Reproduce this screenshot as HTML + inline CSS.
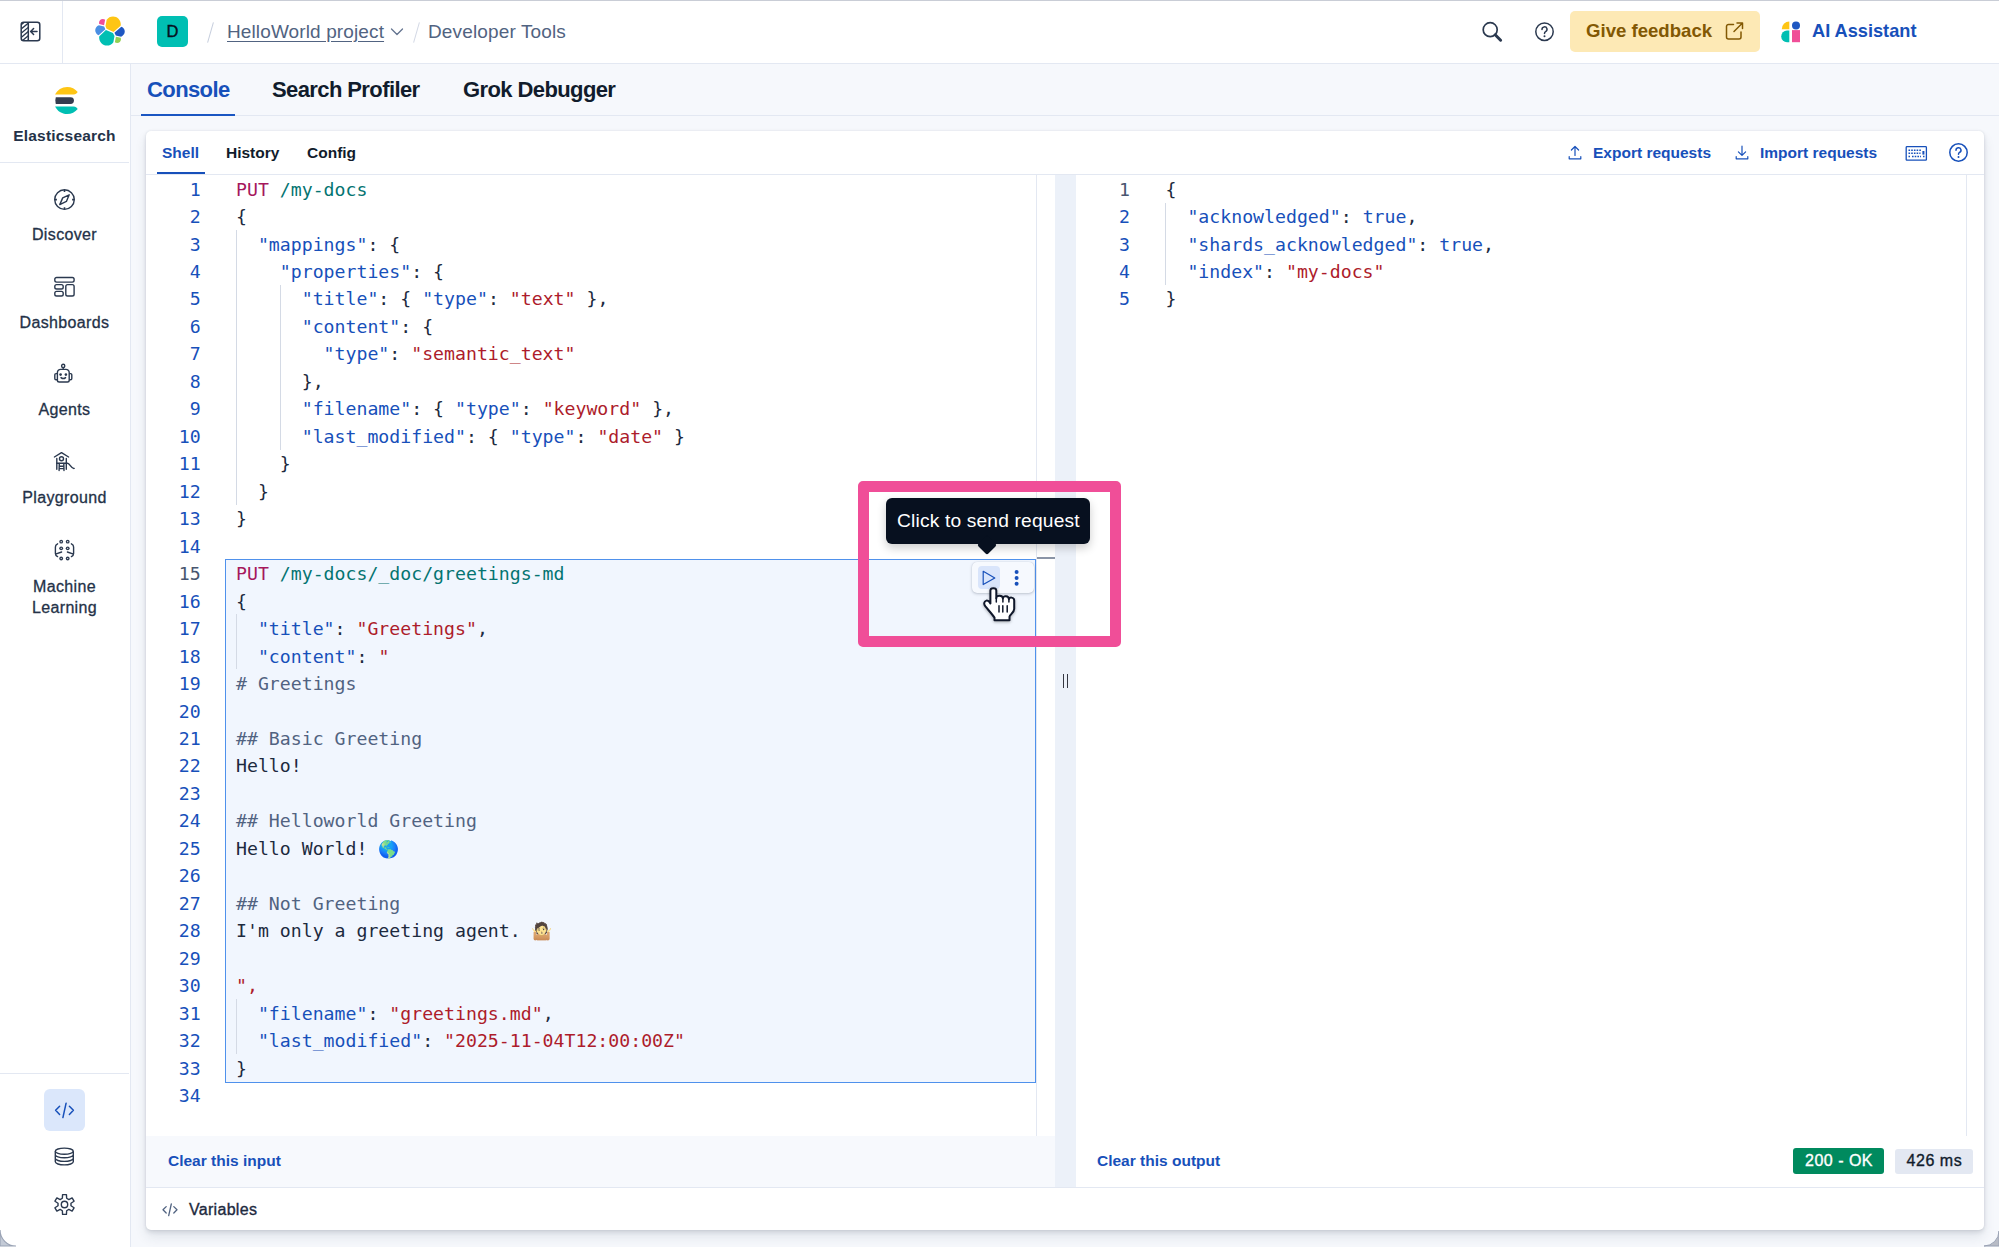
<!DOCTYPE html>
<html lang="en">
<head>
<meta charset="utf-8">
<title>Developer Tools - Console</title>
<style>
*{box-sizing:border-box;margin:0;padding:0}
html,body{width:1999px;height:1247px;overflow:hidden;background:#f6f8fc}
body{position:relative;font-family:"Liberation Sans",sans-serif;color:#1a1f2c}
.abs{position:absolute}
.med{font-weight:normal!important;-webkit-text-stroke:.35px currentColor}
.t{position:absolute;white-space:nowrap;line-height:1}
/* header */
#hdr{left:0;top:0;width:1999px;height:64px;background:#fff;border-bottom:1px solid #e3e8f2;border-top:1px solid #c9cdd6}
#hsep{left:62px;top:1px;width:1px;height:62px;background:#e3e8f2}
#avatar{left:157px;top:16px;width:31px;height:31px;border-radius:5px;background:#00bfb3;color:#07101f;font-size:16.500px;-webkit-text-stroke:.4px #07101f;text-align:center;line-height:31.500px}
.bc{font-size:19px;color:#516381;top:22px}
#fb{left:1570px;top:11px;width:190px;height:41px;border-radius:5px;background:#fde9b5}
/* side nav */
#nav{left:0;top:64px;width:131px;height:1183px;background:#fff;border-right:1px solid #e3e8f2}
.nl{position:absolute;left:0;width:129px;text-align:center;font-size:16px;color:#243248;line-height:1;white-space:nowrap;letter-spacing:.35px;-webkit-text-stroke:.3px currentColor}
.nsep{position:absolute;left:0;width:129px;height:1px;background:#e3e8f2}
/* tabs */
.tab{font-size:22px;letter-spacing:-.6px;font-weight:bold;color:#111c2c;top:78.500px}
#tabline{left:131px;top:115px;width:1868px;height:1px;background:#e3e8f2}
/* panel */
#panel{left:146px;top:131px;width:1838px;height:1099px;background:#fff;border-radius:5px;box-shadow:0 0 2px rgba(43,57,79,.10),0 2px 4px rgba(43,57,79,.13),0 7px 12px rgba(43,57,79,.10)}
.stab{font-size:15.5px;font-weight:bold;color:#111c2c;top:145px}
.lnk{font-size:15.5px;font-weight:bold;color:#1750ba}
/* code */
.code{position:absolute;font-family:"DejaVu Sans Mono","Liberation Mono",monospace;font-size:18.19px;line-height:27.48px;color:#1d2a3e}
.ln{position:absolute;font-family:"DejaVu Sans Mono","Liberation Mono",monospace;font-size:18.19px;line-height:27.48px;color:#1750ba;text-align:right}
.m{color:#a6185c}.u{color:#047471}.k{color:#1750ba}.s{color:#ad1c2b}.p{color:#1d2a3e}.g{color:#516381}
.cl{height:27.48px;white-space:pre}.dk{color:#48566f}.emo{font-family:"Noto Color Emoji",sans-serif;font-size:17px}
.guide{position:absolute;width:1px;background:#d4dae5}
</style>
</head>
<body>
<!-- HEADER -->
<div id="hdr" class="abs"></div>
<div id="hsep" class="abs"></div>
<div id="avatar" class="abs">D</div>
<div class="abs" style="left:209.500px;top:22px;width:1.300px;height:21px;background:#c6cedd;transform:rotate(16deg)"></div>
<div class="t bc" style="left:227px;letter-spacing:.12px;text-decoration:underline;text-underline-offset:3px">HelloWorld project</div>
<div class="abs" style="left:415.500px;top:22px;width:1.300px;height:21px;background:#d3d9e5;transform:rotate(16deg)"></div>
<div class="t bc" style="left:428px;letter-spacing:.14px">Developer Tools</div>
<div id="fb" class="abs"></div>
<div class="t" style="left:1586px;top:22px;font-size:18.600px;font-weight:bold;color:#825803">Give feedback</div>
<div class="t" style="left:1812px;top:22px;font-size:18.200px;font-weight:bold;color:#1750ba">AI Assistant</div>

<!-- NAV -->
<div id="nav" class="abs">
  <div class="nl" style="top:64px;font-weight:bold;font-size:15.5px;letter-spacing:.2px;-webkit-text-stroke:0">Elasticsearch</div>
  <div class="nsep" style="top:98px"></div>
  <div class="nl" style="top:163px">Discover</div>
  <div class="nl" style="top:251px">Dashboards</div>
  <div class="nl" style="top:338px">Agents</div>
  <div class="nl" style="top:426px">Playground</div>
  <div class="nl" style="top:515px">Machine</div>
  <div class="nl" style="top:536px">Learning</div>
  <div class="nsep" style="top:1009px"></div>
</div>


<!-- TABS -->
<div class="t tab" style="left:147px;color:#1750ba">Console</div>
<div class="t tab" style="left:272px">Search Profiler</div>
<div class="t tab" style="left:463px">Grok Debugger</div>
<div id="tabline" class="abs"></div>
<div class="abs" style="left:141px;top:113.500px;width:93.500px;height:2px;background:#1a56c2"></div>

<!-- PANEL -->
<div id="panel" class="abs"></div>
<div class="t stab" style="left:162px;color:#1750ba">Shell</div>
<div class="t stab" style="left:226px">History</div>
<div class="t stab" style="left:307px">Config</div>
<div class="abs" style="left:157px;top:172px;width:48px;height:2px;background:#1750ba"></div>
<div class="abs" style="left:146px;top:174px;width:1838px;height:1px;background:#e3e8f2"></div>
<div class="t lnk" style="left:1593px;top:145px">Export requests</div>
<div class="t lnk" style="left:1760px;top:145px">Import requests</div>


<!-- EDITOR LEFT -->
<div class="abs" style="left:225px;top:559px;width:811px;height:524px;background:#f1f6fe;border:1px solid #4f91ec"></div>
<div class="ln" style="left:150.700px;top:175.6px;width:50px">
<div class="cl">1</div>
<div class="cl">2</div>
<div class="cl">3</div>
<div class="cl">4</div>
<div class="cl">5</div>
<div class="cl">6</div>
<div class="cl">7</div>
<div class="cl">8</div>
<div class="cl">9</div>
<div class="cl">10</div>
<div class="cl">11</div>
<div class="cl">12</div>
<div class="cl">13</div>
<div class="cl">14</div>
<div class="cl dk">15</div>
<div class="cl">16</div>
<div class="cl">17</div>
<div class="cl">18</div>
<div class="cl">19</div>
<div class="cl">20</div>
<div class="cl">21</div>
<div class="cl">22</div>
<div class="cl">23</div>
<div class="cl">24</div>
<div class="cl">25</div>
<div class="cl">26</div>
<div class="cl">27</div>
<div class="cl">28</div>
<div class="cl">29</div>
<div class="cl">30</div>
<div class="cl">31</div>
<div class="cl">32</div>
<div class="cl">33</div>
<div class="cl">34</div>
</div>
<div class="guide" style="left:236px;top:230px;height:275px"></div>
<div class="guide" style="left:280px;top:285px;height:165px"></div>
<div class="guide" style="left:236px;top:614px;height:55px"></div>
<div class="guide" style="left:236px;top:999px;height:55px"></div>
<div class="code" style="left:236px;top:175.6px">
<div class="cl"><span class="m">PUT</span> <span class="u">/my-docs</span></div>
<div class="cl">{</div>
<div class="cl">  <span class="k">"mappings"</span>: {</div>
<div class="cl">    <span class="k">"properties"</span>: {</div>
<div class="cl">      <span class="k">"title"</span>: { <span class="k">"type"</span>: <span class="s">"text"</span> },</div>
<div class="cl">      <span class="k">"content"</span>: {</div>
<div class="cl">        <span class="k">"type"</span>: <span class="s">"semantic_text"</span></div>
<div class="cl">      },</div>
<div class="cl">      <span class="k">"filename"</span>: { <span class="k">"type"</span>: <span class="s">"keyword"</span> },</div>
<div class="cl">      <span class="k">"last_modified"</span>: { <span class="k">"type"</span>: <span class="s">"date"</span> }</div>
<div class="cl">    }</div>
<div class="cl">  }</div>
<div class="cl">}</div>
<div class="cl">&nbsp;</div>
<div class="cl"><span class="m">PUT</span> <span class="u">/my-docs/_doc/greetings-md</span></div>
<div class="cl">{</div>
<div class="cl">  <span class="k">"title"</span>: <span class="s">"Greetings"</span>,</div>
<div class="cl">  <span class="k">"content"</span>: <span class="s">"</span></div>
<div class="cl"><span class="g"># Greetings</span></div>
<div class="cl">&nbsp;</div>
<div class="cl"><span class="g">## Basic Greeting</span></div>
<div class="cl">Hello!</div>
<div class="cl">&nbsp;</div>
<div class="cl"><span class="g">## Helloworld Greeting</span></div>
<div class="cl">Hello World! <span class="emo">🌎</span></div>
<div class="cl">&nbsp;</div>
<div class="cl"><span class="g">## Not Greeting</span></div>
<div class="cl">I'm only a greeting agent. <span class="emo" style="filter:grayscale(.55) brightness(1.12)">🤷</span></div>
<div class="cl">&nbsp;</div>
<div class="cl"><span class="s">",</span></div>
<div class="cl">  <span class="k">"filename"</span>: <span class="s">"greetings.md"</span>,</div>
<div class="cl">  <span class="k">"last_modified"</span>: <span class="s">"2025-11-04T12:00:00Z"</span></div>
<div class="cl">}</div>
<div class="cl">&nbsp;</div>
</div>
<!-- EDITOR RIGHT -->
<div class="ln" style="left:1080px;top:175.6px;width:50px">
<div class="cl dk">1</div>
<div class="cl">2</div>
<div class="cl">3</div>
<div class="cl">4</div>
<div class="cl">5</div>
</div>
<div class="guide" style="left:1165px;top:203px;height:82px"></div>
<div class="code" style="left:1165.5px;top:175.6px">
<div class="cl">{</div>
<div class="cl">  <span class="k">"acknowledged"</span>: <span class="k">true</span>,</div>
<div class="cl">  <span class="k">"shards_acknowledged"</span>: <span class="k">true</span>,</div>
<div class="cl">  <span class="k">"index"</span>: <span class="s">"my-docs"</span></div>
<div class="cl">}</div>
</div>

<!-- editor chrome -->
<div class="abs" style="left:1036px;top:175px;width:1px;height:961px;background:#e3e8f2"></div>
<div class="abs" style="left:1037px;top:557px;width:18px;height:2px;background:#8a94a6"></div>
<div class="abs" style="left:1055px;top:175px;width:20.700px;height:1012px;background:#ecf1f9"></div>
<div class="abs" style="left:1063px;top:674px;width:1px;height:14px;background:#343741"></div>
<div class="abs" style="left:1067px;top:674px;width:1px;height:14px;background:#343741"></div>
<div class="abs" style="left:1966px;top:175px;width:1px;height:961px;background:#e3e8f2"></div>
<div class="abs" style="left:146px;top:1135.500px;width:909px;height:51.500px;background:#f7f9fd"></div>
<div class="abs" style="left:146px;top:1187px;width:1838px;height:1px;background:#e3e8f2"></div>
<div class="t lnk" style="left:168px;top:1153px">Clear this input</div>
<div class="t lnk" style="left:1097px;top:1153px">Clear this output</div>
<div class="abs" style="left:1793px;top:1148px;width:91px;height:26px;background:#008a5e;border-radius:3px"></div>
<div class="t med" style="left:1805px;top:1153px;font-size:16px;letter-spacing:.5px;color:#fff">200 - OK</div>
<div class="abs" style="left:1895px;top:1149px;width:78px;height:25px;background:#e3e8f2;border-radius:3px"></div>
<div class="t med" style="left:1906.5px;top:1153px;font-size:16px;letter-spacing:.55px;color:#111c2c">426 ms</div>
<div class="t med" style="left:189px;top:1202px;font-size:16px;letter-spacing:.3px;color:#1d2a3e">Variables</div>

<!-- ICONS -->
<!-- collapse menu -->
<svg class="abs" style="left:20px;top:21px" width="21" height="21" viewBox="0 0 21 21" fill="none" stroke="#2b394f" stroke-width="1.5">
  <defs><clipPath id="cpL"><rect x="1.5" y="1.5" width="7" height="18"/></clipPath></defs>
  <rect x="1.2" y="1.2" width="18.6" height="18.6" rx="2.5"/>
  <line x1="8.3" y1="1.2" x2="8.3" y2="19.8"/>
  <g clip-path="url(#cpL)" stroke-width="1.300"><path d="M-2 6.500 L10 -3.500 M-2 10.700 L10 .700 M-2 14.900 L10 4.900 M-2 19.100 L10 9.100 M-2 23.300 L10 13.300 M-2 27.500 L10 17.500"/></g>
  <path d="M17 10.5 H10.8 M13.6 7.5 L10.6 10.5 L13.6 13.5" stroke-linecap="round" stroke-linejoin="round"/>
</svg>
<!-- elastic logo -->
<svg class="abs" style="left:94px;top:15px" width="32" height="32" viewBox="0 0 32 32">
  <path fill="#FEC514" d="M12.58 13.787l7.002 3.211 7.066-6.213a7.849 7.849 0 0 0 .152-1.557c0-4.287-3.472-7.775-7.74-7.775a7.723 7.723 0 0 0-6.388 3.382l-1.176 6.122 1.084 2.83z"/>
  <path fill="#00BFB3" d="M5.32 21.215a7.93 7.93 0 0 0-.148 1.58c0 4.303 3.485 7.803 7.77 7.803a7.75 7.75 0 0 0 6.415-3.408l1.167-6.104-1.557-2.99-7.03-3.217-6.617 6.336z"/>
  <path fill="#F04E98" d="M5.278 9.112l4.799 1.138 1.051-5.482a3.791 3.791 0 0 0-2.313-.789c-2.086 0-3.783 1.706-3.783 3.803 0 .463.083.908.246 1.33"/>
  <path fill="#4A8FE3" d="M4.861 10.262c-2.143.712-3.64 2.778-3.64 5.05 0 2.212 1.362 4.187 3.406 4.966l6.733-6.112-1.237-2.654-5.262-1.25z"/>
  <path fill="#93D052" d="M20.862 27.189a3.775 3.775 0 0 0 2.306.79c2.086 0 3.783-1.705 3.783-3.802 0-.463-.083-.907-.246-1.33l-4.795-1.126-1.048 5.468z"/>
  <path fill="#1E57C2" d="M21.837 20.435l5.279 1.24c2.145-.712 3.642-2.78 3.642-5.052a5.32 5.32 0 0 0-3.417-4.955l-6.904 6.078 1.4 2.689z"/>
</svg>
<!-- breadcrumb chevron -->
<svg class="abs" style="left:390px;top:25px" width="14" height="14" viewBox="0 0 14 14" fill="none" stroke="#64748f" stroke-width="1.300" stroke-linecap="round" stroke-linejoin="round"><path d="M1.500 4 L7 9.500 L12.500 4"/></svg>
<!-- search -->
<svg class="abs" style="left:1481px;top:20px" width="23" height="23" viewBox="0 0 23 23" fill="none" stroke="#2b394f" stroke-width="1.7"><circle cx="9.2" cy="9.7" r="7"/><path d="M14.2 14.8 L19.6 20.2" stroke-width="3" stroke-linecap="round"/></svg>
<!-- help (header) -->
<svg class="abs" style="left:1534px;top:21px" width="21" height="21" viewBox="0 0 21 21" fill="none" stroke="#2b394f" stroke-width="1.5"><circle cx="10.5" cy="10.7" r="8.7"/><path d="M8 8.4 a2.5 2.5 0 1 1 3.6 2.2 c-.8.4-1.1.9-1.1 1.8" stroke-linecap="round"/><circle cx="10.5" cy="15.2" r="1" fill="#2b394f" stroke="none"/></svg>
<!-- popout -->
<svg class="abs" style="left:1725px;top:21px" width="20" height="20" viewBox="0 0 20 20" fill="none" stroke="#825803" stroke-width="1.5" stroke-linecap="round" stroke-linejoin="round"><path d="M8.5 3.5 H3.5 a2 2 0 0 0 -2 2 V16 a2 2 0 0 0 2 2 H14 a2 2 0 0 0 2 -2 V11"/><path d="M12 2 H17.5 V7.5 M17.5 2 L9 10.5"/></svg>
<!-- AI assistant -->
<svg class="abs" style="left:1780px;top:20px" width="22" height="24" viewBox="0 0 22 24">
  <path d="M9.3 1.5 V9.3 H1.8 A7.6 7.6 0 0 1 9.3 1.5 Z" fill="#fec514"/>
  <path d="M9.3 10.6 V22.2 H7 A5.8 5.8 0 0 1 7 10.6 Z" fill="#00bfb3"/>
  <circle cx="16" cy="5.4" r="4" fill="#1e57c2"/>
  <rect x="12" y="10.1" width="8" height="12.1" fill="#f04e98"/>
</svg>
<!-- export / import -->
<svg class="abs" style="left:1568px;top:145px" width="14" height="15" viewBox="0 0 14 15" fill="none" stroke="#1750ba" stroke-width="1.2" stroke-linecap="round" stroke-linejoin="round"><path d="M7 10.5 V1.6 M3.4 5 L7 1.5 L10.6 5 M1.2 11.5 V13.8 H12.8 V11.5"/></svg>
<svg class="abs" style="left:1735px;top:145px" width="14" height="15" viewBox="0 0 14 15" fill="none" stroke="#1750ba" stroke-width="1.2" stroke-linecap="round" stroke-linejoin="round"><path d="M7 1.2 V10.2 M3.4 6.8 L7 10.4 L10.6 6.8 M1.2 11.5 V13.8 H12.8 V11.5"/></svg>
<!-- keyboard -->
<svg class="abs" style="left:1905px;top:145px" width="23" height="17" viewBox="0 0 23 17" fill="none" stroke="#1750ba" stroke-width="1.3"><rect x="1.2" y="1.6" width="20.2" height="13.6" rx="0.8"/><path d="M3.5 5.2 H17 M3.5 8.2 H15.5 M3.5 11.6 H5 M7 11.6 H16 M18 11.6 H19.5" stroke-dasharray="1.6 1.1" stroke-width="1.5"/><path d="M18.4 6 V9.6" stroke-width="2"/></svg>
<!-- help (panel) -->
<svg class="abs" style="left:1948px;top:142px" width="21" height="21" viewBox="0 0 21 21" fill="none" stroke="#1750ba" stroke-width="1.5"><circle cx="10.5" cy="10.5" r="8.7"/><path d="M8 8.2 a2.5 2.5 0 1 1 3.6 2.2 c-.8.4-1.1.9-1.1 1.8" stroke-linecap="round"/><circle cx="10.5" cy="15" r="1" fill="#1750ba" stroke="none"/></svg>
<!-- variables icon -->
<svg class="abs" style="left:162px;top:1203px" width="16" height="14" viewBox="0 0 16 14" fill="none" stroke="#516381" stroke-width="1.3" stroke-linecap="round" stroke-linejoin="round"><path d="M4.2 3.6 L1 6.8 L4.2 10 M11.8 3.6 L15 6.8 L11.8 10 M9.3 1 L6.7 12.6"/></svg>

<!-- NAV ICONS -->
<!-- elasticsearch logo -->
<svg class="abs" style="left:52px;top:87px" width="27" height="27" viewBox="0 0 32 32">
  <path fill="#343c4f" d="M4 16c0 1.384.194 2.720.524 4H22a4 4 0 0 0 0-8H4.524A15.984 15.984 0 0 0 4 16"/>
  <path fill="#FEC514" d="M28.924 7.662A15.381 15.381 0 0 0 30.480 6C27.547 2.346 23.050 0 18 0 11.679 0 6.239 3.678 3.644 9H25.510a5.039 5.039 0 0 0 3.413-1.338"/>
  <path fill="#00BFB3" d="M25.510 23H3.645C6.240 28.323 11.679 32 18 32c5.050 0 9.547-2.346 12.480-6a15.381 15.381 0 0 0-1.556-1.662A5.034 5.034 0 0 0 25.510 23"/>
</svg>
<!-- discover (compass) -->
<svg class="abs" style="left:53px;top:188px" width="23" height="23" viewBox="0 0 23 23" fill="none" stroke="#2b394f" stroke-width="1.4" stroke-linejoin="round"><circle cx="11.5" cy="11.6" r="9.8"/><path d="M11.5 2 V4 M11.5 19.2 V21.2 M1.9 11.6 H3.9 M19.1 11.6 H21.1" stroke-width="1.6"/><path d="M16.2 6.8 L13.4 13.4 L6.8 16.6 L9.7 9.9 Z"/></svg>
<!-- dashboards -->
<svg class="abs" style="left:53px;top:276px" width="23" height="22" viewBox="0 0 23 22" fill="none" stroke="#2b394f" stroke-width="1.4"><rect x="1.8" y="1.5" width="19.3" height="4.6" rx="1.8"/><rect x="1.8" y="8.6" width="8.4" height="4.4" rx="1.8"/><rect x="1.8" y="15.4" width="8.4" height="4.6" rx="1.8"/><rect x="12.8" y="8.6" width="8.3" height="11.4" rx="1.8"/></svg>
<!-- agents (robot) -->
<svg class="abs" style="left:53px;top:363px" width="22" height="21" viewBox="0 0 22 21" fill="none" stroke="#2b394f" stroke-width="1.4" stroke-linejoin="round"><circle cx="10.2" cy="2.9" r="1.6"/><path d="M10.2 4.5 V6.4"/><path d="M4.4 9.6 a3.2 3.2 0 0 1 3.2 -3.2 h5.4 a3.2 3.2 0 0 1 3.2 3.2 v7.6 a1.8 1.8 0 0 1 -1.8 1.8 h-8.200 a1.8 1.800 0 0 1 -1.800 -1.800 z"/><path d="M4.400 10.600 h-1.400 a1.200 1.200 0 0 0 -1.200 1.200 v3.800 a1.200 1.200 0 0 0 1.200 1.200 h1.400 M16.200 10.600 h1.400 a1.200 1.200 0 0 1 1.200 1.200 v3.800 a1.200 1.200 0 0 1 -1.200 1.200 h-1.400"/><circle cx="7.600" cy="11.600" r="1.300" fill="#2b394f" stroke="none"/><circle cx="12.900" cy="11.600" r="1.300" fill="#2b394f" stroke="none"/><path d="M8 14.600 q2.300 2 4.600 0" stroke-linecap="round"/></svg>
<!-- playground -->
<svg class="abs" style="left:53px;top:451px" width="23" height="21" viewBox="0 0 23 21" fill="none" stroke="#2b394f" stroke-width="1.4" stroke-linecap="round" stroke-linejoin="round"><path d="M1.400 6 L8.500 1.700 L15.600 6"/><circle cx="8.500" cy="7.800" r="2"/><path d="M3.800 7.400 V18.300 M13.300 7.400 V18.300"/><path d="M3.800 12.300 H14.500 C17 12.300 18 18 21.200 17.400"/><path d="M6.300 12.400 L6.100 19.600 M10.800 12.400 L11 19.600 M6.200 15.200 H10.900 M6.100 17.600 H11"/></svg>
<!-- machine learning -->
<svg class="abs" style="left:53px;top:538px" width="23" height="24" viewBox="0 0 23 24" fill="none" stroke="#2b394f" stroke-width="1.4" stroke-linecap="round"><g fill="#2b394f" stroke="none"><circle cx="8.200" cy="3.700" r="1.900"/><circle cx="14.700" cy="3.700" r="1.900"/><circle cx="8.200" cy="10.300" r="1.900"/><circle cx="14.700" cy="10.300" r="1.900"/><circle cx="8.200" cy="20.500" r="1.900"/><circle cx="14.700" cy="20.500" r="1.900"/></g><g fill="#fff" stroke="none"><circle cx="8.200" cy="3.700" r=".6"/><circle cx="14.700" cy="3.700" r=".6"/><circle cx="8.200" cy="10.300" r=".6"/><circle cx="14.700" cy="10.300" r=".6"/><circle cx="8.200" cy="20.500" r=".6"/><circle cx="14.700" cy="20.500" r=".6"/></g><path d="M4.600 5.800 C3 6.600 2.400 7.600 2.400 9 V15.400 C2.400 16.800 3 17.800 4.600 18.600 M3.200 15.900 L8.600 14 M18.400 5.800 C20 6.600 20.600 7.600 20.600 9 V15.400 C20.600 16.800 20 17.800 18.400 18.600 M19.800 15.900 L14.400 14"/></svg>
<!-- bottom nav: code button -->
<div class="abs" style="left:44px;top:1089px;width:41px;height:42px;border-radius:6px;background:#dbe7fb"></div>
<svg class="abs" style="left:54px;top:1101px" width="21" height="19" viewBox="0 0 21 19" fill="none" stroke="#1750ba" stroke-width="1.5" stroke-linecap="round" stroke-linejoin="round"><path d="M5.600 5.200 L1.600 9.300 L5.600 13.400 M15.400 5.200 L19.400 9.300 L15.400 13.400 M12.100 2.200 L8.900 16.600"/></svg>
<!-- database -->
<svg class="abs" style="left:53px;top:1146px" width="23" height="21" viewBox="0 0 23 21" fill="none" stroke="#2b394f" stroke-width="1.4"><ellipse cx="11.300" cy="5.200" rx="9" ry="3.100"/><path d="M2.300 5.200 V15.800 C2.300 17.500 6.300 18.900 11.300 18.900 S20.300 17.500 20.300 15.800 V5.200 M2.300 8.700 C2.300 10.400 6.300 11.800 11.300 11.800 S20.300 10.400 20.300 8.700 M2.300 12.300 C2.300 14 6.300 15.400 11.300 15.400 S20.300 14 20.300 12.300"/></svg>
<!-- gear -->
<svg class="abs" style="left:53px;top:1193px" width="23" height="23" viewBox="-11.500 -11.500 23 23" fill="none" stroke="#2b394f" stroke-width="1.400" stroke-linejoin="round"><circle cx="0" cy="0" r="3.200"/><path d="M-2.15 -6.24 L-1.93 -9.91 L1.93 -9.91 L2.15 -6.24 L4.33 -4.98 L7.62 -6.63 L9.55 -3.29 L6.48 -1.26 L6.48 1.26 L9.55 3.29 L7.62 6.63 L4.33 4.98 L2.15 6.24 L1.93 9.91 L-1.93 9.91 L-2.15 6.24 L-4.33 4.98 L-7.62 6.63 L-9.55 3.29 L-6.48 1.26 L-6.48 -1.26 L-9.55 -3.29 L-7.62 -6.63 L-4.33 -4.98 Z"/></svg>

<!-- action buttons -->
<div class="abs" style="left:972px;top:562px;width:62px;height:31px;background:#f6f9fe;border-radius:5px;box-shadow:0 1px 3px rgba(43,57,79,.25),0 0 1px rgba(43,57,79,.2)"></div>
<div class="abs" style="left:978px;top:566px;width:22px;height:23px;background:#d9e5fb;border-radius:4px"></div>
<svg class="abs" style="left:980px;top:568px" width="18" height="20" viewBox="0 0 18 20" fill="none" stroke="#1750ba" stroke-width="1.2" stroke-linejoin="round"><path d="M3.200 3.300 V16.600 L14.800 9.950 Z"/></svg>
<svg class="abs" style="left:1012px;top:568px" width="10" height="20" viewBox="0 0 10 20" fill="#1750ba"><circle cx="4.600" cy="4" r="2"/><circle cx="4.600" cy="9.900" r="2"/><circle cx="4.600" cy="15.800" r="2"/></svg>
<!-- tooltip -->
<div class="abs" style="left:886px;top:498px;width:204px;height:46px;background:#07101f;border-radius:6px;box-shadow:0 4px 10px rgba(0,0,0,.2)"></div>
<div class="abs" style="left:980px;top:538px;width:14px;height:14px;background:#07101f;transform:rotate(45deg);border-radius:2px"></div>
<div class="t" style="left:897px;top:511px;font-size:19.2px;letter-spacing:.17px;color:#fff">Click to send request</div>
<!-- pink highlight -->
<div class="abs" style="left:858px;top:481px;width:263px;height:166px;border:11px solid #f04e98;border-radius:5px"></div>
<!-- hand cursor -->
<svg class="abs" style="left:980px;top:584px;filter:drop-shadow(0 1px 1.5px rgba(0,0,0,.3))" width="40" height="42" viewBox="0 0 40 42">
  <path d="M10.4 19.4 L10.4 6.6 C10.4 3.300 16.300 3.300 16.300 6.600 L16.300 14.200 C16.300 10.800 22.900 10.800 22.900 14.400 C22.900 11.400 28.900 11.600 28.900 15.200 C28.900 12.800 34.200 13 34.200 16.400 L34.200 25 C34.200 28.400 30 30.400 29.500 32.600 L29.500 36.300 H14.500 L14.500 33.600 C12 30 8 25.600 5.400 22.400 C3.400 20 4 17.400 6.400 16.600 C8 16.200 9.400 17.800 10.400 19.400 Z" fill="#fff" stroke="#10182b" stroke-width="2" stroke-linejoin="round"/>
  <path d="M19 21.800 V28 M22.800 21.800 V28 M27.200 21.800 V28 M16.300 14 V18 M22.900 14.400 V18 M28.900 15.200 V18" stroke="#10182b" stroke-width="1.500" fill="none" stroke-linecap="round"/>
</svg>
<!-- window corners -->
<svg class="abs" style="left:0;top:1229px" width="18" height="18" viewBox="0 0 18 18"><path d="M0 1 A16 16 0 0 0 16 17 L0 17 Z" fill="#c3cad6" stroke="#9aa3b5" stroke-width="1.2"/></svg>
<svg class="abs" style="left:1981px;top:1229px" width="18" height="18" viewBox="0 0 18 18"><path d="M18 2 A15 15 0 0 1 3 17 L18 17 Z" fill="#b8bcc6" stroke="#9aa3b5" stroke-width="1"/></svg>
</body>
</html>
